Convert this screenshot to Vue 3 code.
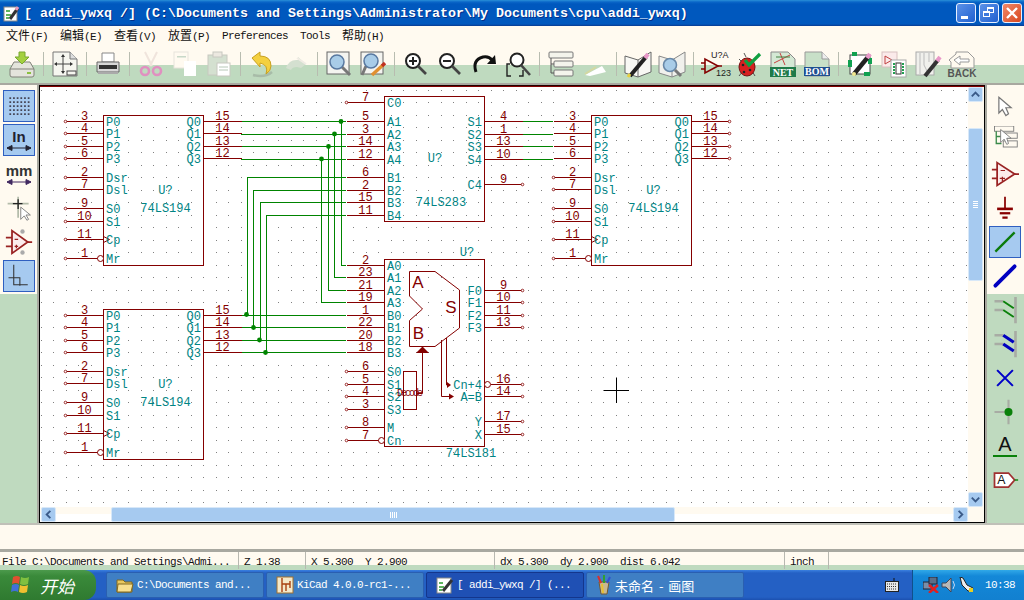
<template>
  <div class="window">
    <div class="titlebar">
      <svg class="title-icon" width="17" height="17" viewBox="0 0 17 17">
        <rect x="1" y="2" width="13" height="14" fill="#fff" stroke="#888" />
        <path d="M3 6h4M3 10h5M3 13h3" stroke="#2a9a2a" stroke-width="1.5" />
        <path d="M7 14 15 3" stroke="#333" stroke-width="3" />
        <path d="M13 5 15 2" stroke="#e89ac0" stroke-width="3" />
      </svg>
      <span class="title-text">[ addi_ywxq /] (C:\Documents and Settings\Administrator\My Documents\cpu\addi_ywxq)</span>
      <div class="win-btns">
        <div class="win-btn"><i class="min-glyph"></i></div>
        <div class="win-btn"><i class="max-back"></i><i class="max-front"></i></div>
        <div class="win-btn close">
          <svg width="14" height="14" viewBox="0 0 14 14"><path d="M2 2 12 12M12 2 2 12" stroke="#fff" stroke-width="2.4" /></svg>
        </div>
      </div>
    </div>

    <div class="menubar">
      <span v-for="m in menus" :key="m.key" class="menu-item">
        <span v-if="m.cjk" class="menu-cjk">{{ m.cjk }}</span>{{ m.key }}
      </span>
    </div>

    <div class="toolbar">
      <div class="ti"><svg viewBox="0 0 26 26"><path d="M1 18 5 11H21L25 18V24Q25 26 23 26H3Q1 26 1 24Z" fill="#e4e4dc" stroke="#808078" /><path d="M1 18H25" stroke="#808078" /><rect x="18" y="21" width="4" height="2" fill="#8ac040" /><path d="M10 1H16V6H20L13 13 6 6H10Z" fill="#a4d040" stroke="#78a830" /></svg></div>
      <div class="sep"></div>
      <div class="ti"><svg viewBox="0 0 26 26"><path d="M1 1H18L25 8V25H1Z" fill="#f6f6f0" stroke="#777" /><path d="M18 1V8H25" fill="#ddd" stroke="#777" /><path d="M11 5V21M4 13H19" stroke="#444" /><path d="M11 3 9 6H13ZM11 23 9 20H13ZM2 13 5 11V15ZM21 13 18 11V15Z" fill="#333" /><rect x="15" y="20" width="9" height="4" fill="none" stroke="#444" /></svg></div>
      <div class="sep"></div>
      <div class="ti"><svg viewBox="0 0 26 26"><path d="M7 2H19V11H7Z" fill="#fff" stroke="#888" /><path d="M2 11H24V21H2Z" fill="#d8d8d8" stroke="#666" /><rect x="4" y="14" width="18" height="4" fill="#333" /><rect x="3" y="21" width="20" height="2" fill="#aaa" /></svg></div>
      <div class="sep"></div>
      <div class="ti"><svg viewBox="0 0 26 26"><path d="M7 1 14 15M19 1 12 15" stroke="#f0e4dc" stroke-width="2" /><circle cx="7" cy="20" r="4" fill="none" stroke="#e090c0" stroke-width="2.6" /><circle cx="19" cy="20" r="4" fill="none" stroke="#e090c0" stroke-width="2.6" /></svg></div>
      <div class="ti"><svg viewBox="0 0 26 26"><rect x="2" y="1" width="14" height="16" fill="#fffaf0" stroke="#e8e4dc" /><rect x="5" y="5" width="9" height="1.5" fill="#c8d8c8" /><rect x="12" y="10" width="12" height="15" fill="#fff" /></svg></div>
      <div class="ti"><svg viewBox="0 0 26 26"><rect x="2" y="4" width="19" height="20" fill="#d4e0d0" stroke="#c8c8c0" /><rect x="7" y="1" width="9" height="5" fill="#ece8e0" stroke="#c8c8c0" /><rect x="11" y="12" width="13" height="13" fill="#fff" stroke="#c8c8c0" /><path d="M13 16h9M13 19h9" stroke="#b8c8b8" /></svg></div>
      <div class="sep"></div>
      <div class="ti"><svg viewBox="0 0 26 26"><path d="M4 24Q16 27 23 21" stroke="#a8bca8" stroke-width="2.5" fill="none" /><path d="M3 7 11 1V5Q22 5 22 15 22 20 17 23 20 14 11 12V16Z" fill="#f4d040" stroke="#c8a020" /></svg></div>
      <div class="ti"><svg viewBox="0 0 26 26"><path d="M3 17Q6 8 15 9V6L23 13 18 17 14 16Q9 16 8 19Z" fill="#d4e0d0" /><path d="M14 7 23 13" stroke="#f0ece4" stroke-width="2" /></svg></div>
      <div class="sep"></div>
      <div class="ti"><svg viewBox="0 0 26 26"><rect x="1" y="1" width="22" height="22" fill="#f4f4f0" stroke="#666" /><path d="M16 16 24 24" stroke="#777" stroke-width="3" /><circle cx="11" cy="11" r="7" fill="#a8cce8" stroke="#5878a0" stroke-width="1.5" /></svg></div>
      <div class="ti"><svg viewBox="0 0 26 26"><rect x="1" y="1" width="22" height="22" fill="#f4f4f0" stroke="#666" /><path d="M6 15 2 24" stroke="#777" stroke-width="3" /><circle cx="11" cy="10" r="7" fill="#a8cce8" stroke="#5878a0" stroke-width="1.5" /><path d="M12 24 23 14" stroke="#e09030" stroke-width="3.4" /><path d="M22 15 25 12" stroke="#c03020" stroke-width="3.4" /></svg></div>
      <div class="sep"></div>
      <div class="ti"><svg viewBox="0 0 26 26"><circle cx="10" cy="10" r="7" fill="#fff" stroke="#222" stroke-width="2" /><path d="M15 15 23 23" stroke="#444" stroke-width="2.6" /><path d="M6 10H14M10 6V14" stroke="#222" stroke-width="2" /></svg></div>
      <div class="ti"><svg viewBox="0 0 26 26"><circle cx="10" cy="10" r="7" fill="#fff" stroke="#222" stroke-width="2" /><path d="M15 15 23 23" stroke="#444" stroke-width="2.6" /><path d="M6 10H14" stroke="#222" stroke-width="2" /></svg></div>
      <div class="ti"><svg viewBox="0 0 26 26"><path d="M5 21Q1 9 12 6 18 5 21 9" fill="none" stroke="#111" stroke-width="3" /><path d="M16 13 25 13 24 4Z" fill="#111" /></svg></div>
      <div class="ti"><svg viewBox="0 0 26 26"><circle cx="12" cy="9" r="6.5" fill="#fff" stroke="#222" stroke-width="2" /><path d="M16 14 25 24" stroke="#444" stroke-width="2.6" /><path d="M5 13H2V25H6M14 25H18V19" fill="none" stroke="#222" stroke-width="1.4" /></svg></div>
      <div class="sep"></div>
      <div class="ti"><svg viewBox="0 0 26 26"><rect x="1" y="1" width="24" height="6" rx="1" fill="#f4f4ec" stroke="#777" /><rect x="6" y="10" width="19" height="6" rx="1" fill="#f4f4ec" stroke="#777" /><rect x="6" y="19" width="19" height="6" rx="1" fill="#f4f4ec" stroke="#777" /><path d="M3 7V22H6M3 13H6" fill="none" stroke="#555" /></svg></div>
      <div class="ti"><svg viewBox="0 0 26 26"><path d="M3 24 20 15 24 21 8 25Z" fill="#fff" /><path d="M3 23 14 16" stroke="#d4d8a0" stroke-width="2" /><path d="M13 8 22 13" stroke="#fffaf0" stroke-width="2" /></svg></div>
      <div class="sep"></div>
      <div class="ti"><svg viewBox="0 0 26 26"><path d="M0 5 13 9 26 1V21L13 26 0 22Z" fill="#f8f8f4" stroke="#666" /><path d="M13 9V26" stroke="#666" /><path d="M5 25 21 6" stroke="#222" stroke-width="4" /><path d="M20 7 23 3" stroke="#e898c8" stroke-width="4" /><path d="M3 26 5 23" stroke="#e8d040" stroke-width="3" /></svg></div>
      <div class="ti"><svg viewBox="0 0 26 26"><path d="M0 5 13 9 26 1V21L13 26 0 22Z" fill="#f0f0ec" stroke="#888" /><path d="M13 9V26" stroke="#888" /><circle cx="11" cy="14" r="6.5" fill="#a8cce8" stroke="#6888a8" stroke-width="1.6" /><path d="M16 19 22 25" stroke="#777" stroke-width="3" /></svg></div>
      <div class="sep"></div>
      <div class="ti ti-wide"><svg viewBox="0 0 28 26"><path d="M4 8V22L17 15Z" fill="none" stroke="#840000" stroke-width="1.6" /><path d="M0 12H4M0 18H4M17 15H21" stroke="#840000" stroke-width="1.4" /><text x="10" y="7" class="ic-u">U?A</text><text x="15" y="25" class="ic-u">123</text></svg></div>
      <div class="ti"><svg viewBox="0 0 26 26"><path d="M3 8 7 12M3 25 7 20M19 25 16 20M20 6 17 10" stroke="#555" /><ellipse cx="11" cy="16" rx="8" ry="9" fill="#d82020" stroke="#701010" /><circle cx="7" cy="14" r="1.3" fill="#222" /><circle cx="14" cy="19" r="1.3" fill="#222" /><circle cx="8" cy="21" r="1.3" fill="#222" /><path d="M8 2 10 6" stroke="#555" /><path d="M9 9 13 14 24 3" fill="none" stroke="#10a040" stroke-width="3.2" /></svg></div>
      <div class="ti"><svg viewBox="0 0 26 26"><path d="M1 1H18L25 8V25H1Z" fill="#d4e8d4" stroke="#888" /><path d="M4 12 20 4M10 2 15 14" stroke="#c84040" /><path d="M6 6H20" stroke="#408040" /><rect x="0" y="16" width="26" height="10" fill="#1e7a48" /><text x="13" y="24.5" class="ic-band">NET</text></svg></div>
      <div class="ti"><svg viewBox="0 0 26 26"><path d="M1 1H18L25 8V25H1Z" fill="#c8e0c8" stroke="#999" /><path d="M18 1V8H25" fill="#eee" stroke="#999" /><rect x="0" y="16" width="26" height="9" fill="#1f4f90" /><text x="13" y="24" class="ic-band">BOM</text></svg></div>
      <div class="sep"></div>
      <div class="ti"><svg viewBox="0 0 26 26"><rect x="3" y="4" width="20" height="19" fill="#fff" stroke="#444" /><rect x="1" y="9" width="4" height="7" fill="#10a050" /><rect x="21" y="7" width="4" height="6" fill="#10a050" /><rect x="5" y="1" width="5" height="4" fill="#10a050" /><rect x="17" y="21" width="6" height="4" fill="#10a050" /><path d="M7 23 21 6" stroke="#222" stroke-width="4.4" /><path d="M20 7 23 3" stroke="#e898c8" stroke-width="4.4" /><circle cx="7" cy="23" r="2" fill="#f0e890" /></svg></div>
      <div class="ti"><svg viewBox="0 0 26 26"><rect x="1" y="1" width="15" height="15" fill="#fbeaea" stroke="#d8c0c0" /><path d="M4 5V13L11 9Z" fill="none" stroke="#c04040" /><rect x="10" y="9" width="15" height="17" fill="#fff" stroke="#aaa" /><rect x="15" y="12" width="5" height="11" fill="none" stroke="#333" /><path d="M13 12v11M22 12v11" stroke="#20a050" stroke-width="2" stroke-dasharray="2 1" /></svg></div>
      <div class="ti"><svg viewBox="0 0 26 26"><rect x="1" y="1" width="18" height="23" fill="#f0f0ec" stroke="#aaa" /><path d="M5 2V23M9 2V14L12 20M14 2V11" stroke="#bbb" fill="none" /><path d="M10 25 23 9" stroke="#333" stroke-width="4" /><path d="M22 10 25 6" stroke="#e898c8" stroke-width="4" /></svg></div>
      <div class="ti ti-wide"><svg viewBox="0 0 28 26"><path d="M8 1H20L26 7V17H3V11L1 9 8 3Z" fill="#fffaf0" stroke="#999" /><path d="M6 9 12 5V8H21V11H12V14Z" fill="#fff" stroke="#999" /><text x="14" y="25.5" class="ic-back">BACK</text></svg></div>
    </div>

    <div class="main">
      <div class="side side-left">
        <div class="sbtn sel"><svg viewBox="0 0 32 32"><path :d="gridIcon" fill="#445" /></svg></div>
        <div class="sbtn sel unit"><span class="unit-text">In</span><svg class="unit-arrow" viewBox="0 0 26 6"><path d="M1 3H25M1 3 6 .5V5.500ZM25 3 20 .5V5.500Z" stroke="#223" fill="#223" /></svg></div>
        <div class="sbtn unit"><span class="unit-text mm">mm</span><svg class="unit-arrow" viewBox="0 0 26 6"><path d="M1 3H25M1 3 6 .5V5.500ZM25 3 20 .5V5.500Z" stroke="#402860" fill="#402860" /></svg></div>
        <div class="sbtn"><svg viewBox="0 0 32 32"><path d="M3 11H27M15 3V27" stroke="#b4bcaa" stroke-width="2" /><path d="M9 11H20M15 6V17" stroke="#222" stroke-width="1.5" /><path d="M18 15 18 29 22 25 25 30 27 29 24 24 29 24Z" fill="#fff" stroke="#777" /></svg></div>
        <div class="sbtn"><svg viewBox="0 0 32 32"><path d="M8 3 26 16 8 29Z" fill="#fbecec" stroke="#922" stroke-width="2" /><path d="M1 11H8M1 21H8M26 16H31" stroke="#922" stroke-width="2" /><path d="M11 13H15M13 19V23M11 21H15" stroke="#922" stroke-width="1.4" /><circle cx="20" cy="4" r="2.5" fill="#aaa" /><circle cx="20" cy="28" r="2.5" fill="#aaa" /></svg></div>
        <div class="sbtn sel"><svg viewBox="0 0 32 32"><path d="M10 3V26H26" fill="none" stroke="#333" stroke-width="1.2" /><path d="M4 18H17V27" fill="none" stroke="#333" stroke-width="1.2" /></svg></div>
      </div>

      <div class="canvas-frame">
        <div class="canvas-grid">
          <svg class="sheet" width="928" height="420" viewBox="40 87 928 420">
            <path :d="dots" class="dots" />
            <path v-for="(w, i) in wires" :key="'w' + i" :d="w" class="wire" />
            <circle v-for="(j, i) in junctions" :key="'j' + i" :cx="j[0]" :cy="j[1]" r="2.4" class="junction" />

            <g v-for="c in chips" :key="c.ref + c.x + c.y">
              <rect :x="c.x" :y="c.y" :width="c.w" :height="c.h" class="body" />
              <text :x="c.refX" :y="c.refY" class="lbl mid">U?</text>
              <text :x="c.valX" :y="c.valY" class="lbl mid">{{ c.ref }}</text>
              <g v-for="p in c.pins" :key="p.name">
                <line :x1="p.x1" :y1="p.y" :x2="p.x2" :y2="p.y" class="pin" />
                <circle v-if="p.free" :cx="p.freeX" :cy="p.y" r="1.3" class="pin-end" />
                <circle v-if="p.inv" :cx="p.invX" :cy="p.y" r="3" class="pin-inv" />
                <path v-if="p.clk" :d="p.clk" class="pin-clk" />
                <text :x="p.nameX" :y="p.y + 4" class="lbl" :class="{ end: p.right }">{{ p.name }}</text>
                <text :x="p.numX" :y="p.y - 2" class="num">{{ p.num }}</text>
              </g>
            </g>

            <path d="M409.5 271.5H435L459.5 290V328L435 346.5H409.5V320.5L422.5 309 409.5 296Z" class="alu" />
            <text x="418" y="288" class="alu-text">A</text>
            <text x="418.5" y="339" class="alu-text">B</text>
            <text x="451" y="313" class="alu-text">S</text>
            <rect x="403.5" y="371.5" width="13" height="38" class="alu" />
            <text x="397" y="396" class="decode" textLength="26" lengthAdjust="spacing">Decode</text>
            <path d="M416.5 393.5H422.5V352" class="alu" />
            <path d="M422.5 346.5 416 353H429Z" class="alu-fill" />
            <path d="M446.5 338V385H450" class="alu" />
            <path d="M447 382 451 385 447 388Z" class="alu-fill" />
            <path d="M441.5 340V396.5H449" class="alu" />
            <path d="M449 393.5 454 396.5 449 399.5Z" class="alu-fill" />

            <path d="M604 390.5H629M616.5 378V403" class="cross" />
          </svg>

          <div class="vscroll">
            <div class="sb-btn"><svg viewBox="0 0 14 14"><path d="M3 9 7 5 11 9" class="chev" /></svg></div>
            <div class="vspace"></div>
            <div class="vthumb"><i class="grip-h"></i></div>
            <div class="flex-space"></div>
            <div class="sb-btn"><svg viewBox="0 0 14 14"><path d="M3 5 7 9 11 5" class="chev" /></svg></div>
          </div>

          <div class="hscroll">
            <div class="sb-btn"><svg viewBox="0 0 14 14"><path d="M9 3 5 7 9 11" class="chev" /></svg></div>
            <div class="hspace"></div>
            <div class="hthumb"><i class="grip-v"></i></div>
            <div class="flex-space"></div>
            <div class="sb-btn"><svg viewBox="0 0 14 14"><path d="M5 3 9 7 5 11" class="chev" /></svg></div>
          </div>
          <div class="corner"></div>
        </div>
      </div>

      <div class="side side-right">
        <div class="sbtn"><svg viewBox="0 0 32 32"><path d="M9 6 23 18 17 18 20 25 17 27 13 20 9 24Z" fill="#fff" stroke="#777" stroke-width="1.4" /></svg></div>
        <div class="sbtn"><svg viewBox="0 0 32 32"><rect x="4" y="0" width="22" height="6" fill="#fffaf0" stroke="#777" /><rect x="14" y="8" width="16" height="6" fill="#fffaf0" stroke="#777" /><rect x="14" y="17" width="16" height="7" fill="#fffaf0" stroke="#777" /><path d="M6 6V20H12M6 12H12" fill="none" stroke="#3a8a4a" stroke-width="1.5" /><path d="M11 4 11 19 15 15 18 21 20 20 18 14 23 14Z" fill="#fff" stroke="#777" /></svg></div>
        <div class="sbtn"><svg viewBox="0 0 32 32"><path d="M7 3 27 16 7 29Z" fill="#fbecec" stroke="#922" stroke-width="2" /><path d="M1 11H7M1 21H7M27 16H32" stroke="#922" stroke-width="2" /><path d="M11 12H16M13 19V24M10 21H16" stroke="#922" stroke-width="1.4" /></svg></div>
        <div class="sbtn"><svg viewBox="0 0 32 32"><path d="M16 3V17" stroke="#800" stroke-width="2" /><path d="M7 17H25" stroke="#800" stroke-width="3" /><path d="M10 22H22" stroke="#800" stroke-width="2.6" /><path d="M13 27H19" stroke="#800" stroke-width="2.6" /></svg></div>
        <div class="sbtn sel"><svg viewBox="0 0 32 32"><path d="M5 27 27 5" stroke="#0a7a0a" stroke-width="2.6" /></svg></div>
        <div class="sbtn"><svg viewBox="0 0 32 32"><path d="M5 27 27 5" stroke="#0000c0" stroke-width="4.4" stroke-linecap="round" /></svg></div>
        <div class="sbtn"><svg viewBox="0 0 32 32"><path d="M4 6H14M4 16H14M28 1V31" stroke="#a8aca4" stroke-width="3" /><path d="M14 6 26 14M14 16 26 24" stroke="#0a800a" stroke-width="2.2" /></svg></div>
        <div class="sbtn"><svg viewBox="0 0 32 32"><path d="M4 6H14M4 16H14M28 1V31" stroke="#a8aca4" stroke-width="3" /><path d="M14 6 26 14M14 16 26 24" stroke="#0000c0" stroke-width="3.6" /></svg></div>
        <div class="sbtn"><svg viewBox="0 0 32 32"><path d="M7 7 25 25M25 7 7 25" stroke="#0000c8" stroke-width="2.4" /></svg></div>
        <div class="sbtn"><svg viewBox="0 0 32 32"><path d="M4 16H20M20 2V30" stroke="#a8aca4" stroke-width="2.4" /><circle cx="20" cy="16" r="4.6" fill="#0a800a" /></svg></div>
        <div class="sbtn col"><span class="label-a">A</span><i class="label-line"></i></div>
        <div class="sbtn"><svg viewBox="0 0 32 32"><path d="M4 8H20L27 16 20 24H4Z" fill="#fff" stroke="#a03030" stroke-width="2" /><path d="M27 16H31" stroke="#0a800a" stroke-width="1.6" /><text x="7" y="21" class="ic-a">A</text></svg></div>
      </div>
    </div>

    <div class="msg-panel"></div>

    <div class="statusbar">
      <span v-for="s in status" :key="s.text" class="st-cell" :class="s.cls">{{ s.text }}</span>
    </div>

    <div class="taskbar">
      <div class="start">
        <svg width="24" height="22" viewBox="0 0 24 22">
          <path d="M4 3Q8 1 11 3L10 10Q7 8 3 10Z" fill="#e05030" />
          <path d="M12 3Q16 5 20 3L19 10Q15 12 11 10Z" fill="#80c040" />
          <path d="M3 11Q7 9 10 11L9 18Q6 16 2 18Z" fill="#4070d8" />
          <path d="M11 11Q15 13 19 11L18 18Q14 20 10 18Z" fill="#f0c030" />
        </svg>
        <span class="start-text">开始</span>
      </div>
      <div class="task">
        <svg width="18" height="16" viewBox="0 0 18 16"><path d="M1 3H7L9 5H16V15H1Z" fill="#e8c860" stroke="#806820" /><path d="M2 7H17L15 15H1Z" fill="#f8e090" stroke="#806820" /></svg>
        <span>C:\Documents and...</span>
      </div>
      <div class="task">
        <svg width="18" height="18" viewBox="0 0 18 18"><rect x="1" y="1" width="16" height="16" fill="#f4e8c8" stroke="#a07030" /><path d="M6 2V16M6 8H14M10 8V15M14 5V12" stroke="#a84010" stroke-width="1.4" /></svg>
        <span>KiCad 4.0.0-rc1-...</span>
      </div>
      <div class="task active">
        <svg width="18" height="18" viewBox="0 0 18 18"><rect x="1" y="2" width="14" height="15" fill="#fff" stroke="#888" /><path d="M3 7h4M3 11h5M3 14h3" stroke="#2a9a2a" stroke-width="1.5" /><path d="M7 15 16 4" stroke="#333" stroke-width="3" /></svg>
        <span>[ addi_ywxq /] (...</span>
      </div>
      <div class="task paint">
        <svg width="18" height="20" viewBox="0 0 18 20"><path d="M4 7H14L12 19H6Z" fill="#c8b890" stroke="#705830" /><path d="M6 8 3 1" stroke="#d83030" stroke-width="2" /><path d="M9 8V0" stroke="#30a030" stroke-width="2" /><path d="M12 8 15 2" stroke="#3050d0" stroke-width="2" /><path d="M7 9 8 18" stroke="#e8c030" stroke-width="2" /></svg>
        <span class="cjk">未命名 - 画图</span>
      </div>
      <div class="flex-space"></div>
      <svg class="kbd" width="14" height="14" viewBox="0 0 14 14"><path d="M9 0V3" stroke="#111" /><rect x="0.5" y="3.5" width="13" height="10" fill="#e8e8e8" stroke="#222" /><path d="M2 6h10M2 8.500h10M2 11h10" stroke="#333" stroke-dasharray="1 1" /></svg>
      <div class="tray">
        <svg width="16" height="16" viewBox="0 0 16 16"><rect x="0" y="5" width="9" height="7" fill="#7a8ea8" stroke="#223" /><rect x="6" y="0" width="8" height="7" fill="#5a6e88" stroke="#223" /><path d="M6 8 15 16M15 8 6 16" stroke="#e02020" stroke-width="2.4" /></svg>
        <svg width="16" height="16" viewBox="0 0 16 16"><path d="M1 6H5L10 1V15L5 10H1Z" fill="#b8b8b8" stroke="#445" /><path d="M12 4Q15 8 12 12" stroke="#c8d8f0" fill="none" /></svg>
        <svg width="16" height="16" viewBox="0 0 16 16"><path d="M1 0 3 8 9 14H12L14 11 8 8 4 1Z" fill="#eee" stroke="#222" /><rect x="10" y="11" width="4" height="4" fill="#e8d020" /></svg>
        <span class="clock">10:38</span>
      </div>
    </div>
  </div>
</template>

<script setup>
  const menus = [
    { cjk: '文件', key: '(F)' },
    { cjk: '编辑', key: '(E)' },
    { cjk: '查看', key: '(V)' },
    { cjk: '放置', key: '(P)' },
    { key: 'Preferences' },
    { key: 'Tools' },
    { cjk: '帮助', key: '(H)' }
  ]

  const status = [
    { text: 'File C:\\Documents and Settings\\Admi...', cls: 's1' },
    { text: 'Z 1.38', cls: 's2' },
    { text: 'X 5.300  Y 2.900', cls: 's3' },
    { text: 'dx 5.300  dy 2.900  dist 6.042', cls: 's4' },
    { text: 'inch', cls: 's5' },
    { text: '', cls: 's6' }
  ]

  // grid of dots on the sheet, 50 mil at this zoom
  let dots = ''
  for (let i = 0; i < 75; i++) {
    for (let j = 0; j < 34; j++) {
      const x = Math.floor(41.3 + i * 12.5)
      const y = Math.floor(90.1 + j * 12.5)
      dots += `M${x} ${y}h1v1h-1z`
    }
  }

  let gridIcon = ''
  for (let i = 0; i < 6; i++) {
    for (let j = 0; j < 5; j++) {
      gridIcon += `M${5 + i * 4.2} ${6 + j * 4.6}h2v2h-2z`
    }
  }

  const snap = (v) => Math.floor(v) + 0.5

  const leftPin = (bx, row) => {
    const [name, num, y, opts = {}] = row
    const p = {
      name,
      num,
      y: snap(y),
      x1: bx - 38,
      x2: opts.inv ? bx - 6 : bx,
      nameX: bx + 2.5,
      numX: bx - 19,
      free: opts.free,
      freeX: bx - 38,
      inv: opts.inv,
      invX: bx - 3
    }
    if (opts.clk) p.clk = `M${bx} ${snap(y) - 3}L${bx + 6} ${snap(y)}L${bx} ${snap(y) + 3}`
    return p
  }

  const rightPin = (bx, row) => {
    const [name, num, y, opts = {}] = row
    return {
      name,
      num,
      right: true,
      y: snap(y),
      x1: opts.inv ? bx + 6 : bx,
      x2: bx + 38,
      nameX: bx - 2.5,
      numX: bx + 19,
      free: opts.free,
      freeX: bx + 38,
      inv: opts.inv,
      invX: bx + 3
    }
  }

  const make194 = (x, y, inFree, outFree) => {
    const lefts = [
      ['P0', '3', 6, { free: inFree }],
      ['P1', '4', 18.5, { free: inFree }],
      ['P2', '5', 31, { free: inFree }],
      ['P3', '6', 43.5, { free: inFree }],
      ['Dsr', '2', 62, { free: true }],
      ['Dsl', '7', 74.5, { free: true }],
      ['S0', '9', 93.5, { free: true }],
      ['S1', '10', 106, { free: true }],
      ['Cp', '11', 124.5, { free: true, clk: true }],
      ['Mr', '1', 143.5, { free: true, inv: true }]
    ]
    const rights = [
      ['Q0', '15', 6, { free: outFree }],
      ['Q1', '14', 18.5, { free: outFree }],
      ['Q2', '13', 31, { free: outFree }],
      ['Q3', '12', 43.5, { free: outFree }]
    ]
    const shift = (r) => [r[0], r[1], y + r[2], r[3]]
    return {
      ref: '74LS194',
      x: x + 0.5,
      y: y + 0.5,
      w: 100,
      h: 149.5,
      refX: x + 62.5,
      refY: y + 79,
      valX: x + 62.5,
      valY: y + 97,
      pins: [
        ...lefts.map((r) => leftPin(x + 0.5, shift(r))),
        ...rights.map((r) => rightPin(x + 100.5, shift(r)))
      ]
    }
  }

  const chip283 = {
    ref: '74LS283',
    x: 384.5,
    y: 96.5,
    w: 100,
    h: 125,
    refX: 435,
    refY: 162,
    valX: 441,
    valY: 206,
    pins: [
      ...[
        ['C0', '7', 102, { free: true }],
        ['A1', '5', 121],
        ['A2', '3', 134],
        ['A3', '14', 146.5],
        ['A4', '12', 159],
        ['B1', '6', 177.5],
        ['B2', '2', 190],
        ['B3', '15', 202.5],
        ['B4', '11', 215]
      ].map((r) => leftPin(384.5, r)),
      ...[
        ['S1', '4', 121],
        ['S2', '1', 134],
        ['S3', '13', 146.5],
        ['S4', '10', 159],
        ['C4', '9', 184, { free: true }]
      ].map((r) => rightPin(484.5, r))
    ]
  }

  const chip181 = {
    ref: '74LS181',
    x: 384.5,
    y: 259.5,
    w: 100,
    h: 187,
    refX: 467,
    refY: 256,
    valX: 471,
    valY: 457,
    pins: [
      ...[
        ['A0', '2', 265],
        ['A1', '23', 277.5],
        ['A2', '21', 290],
        ['A3', '19', 302.5],
        ['B0', '1', 315],
        ['B1', '22', 327.5],
        ['B2', '20', 340],
        ['B3', '18', 352.5],
        ['S0', '6', 371.5, { free: true }],
        ['S1', '5', 384, { free: true }],
        ['S2', '4', 396.5, { free: true }],
        ['S3', '3', 409, { free: true }],
        ['M', '8', 427.5, { free: true }],
        ['Cn', '7', 440, { free: true, inv: true }]
      ].map((r) => leftPin(384.5, r)),
      ...[
        ['F0', '9', 290, { free: true }],
        ['F1', '10', 302.5, { free: true }],
        ['F2', '11', 315, { free: true }],
        ['F3', '13', 327.5, { free: true }],
        ['Cn+4', '16', 384, { free: true, inv: true }],
        ['A=B', '14', 396.5, { free: true }],
        ['Y', '17', 421.5, { free: true }],
        ['X', '15', 434, { free: true }]
      ].map((r) => rightPin(484.5, r))
    ]
  }

  const chips = [
    make194(103, 115, true, false),
    make194(103, 309, true, false),
    make194(591, 115, false, true),
    chip283,
    chip181
  ]

  const wires = [
    'M241 121.500H346M241 134.500H346M241 146.500H346M241 159.500H346',
    'M241 315.500H346M241 327.500H346M241 340.500H346M241 352.500H346',
    'M522 121.500H553M522 134.500H553M522 146.500H553M522 159.500H553',
    'M341.500 121.500V265.500H346M334.500 134.500V277.500H346M328.500 146.500V290.500H346M321.500 159.500V302.500H346',
    'M247.500 315.500V177.500H346M253.500 327.500V190.500H346M260.500 340.500V202.500H346M266.500 352.500V215.500H346'
  ]

  const junctions = [
    [341, 121.5],
    [334.5, 134],
    [328.5, 146.5],
    [321.5, 159],
    [246.5, 314.5],
    [253.5, 327.5],
    [259.5, 340],
    [265.5, 352.5]
  ]
</script>

<style>
  html,
  body {
    margin: 0;
    overflow: hidden;
    background: #fffaf0;
  }
</style>

<style scoped>
  .window {
    width: 1024px;
    height: 600px;
    display: flex;
    flex-direction: column;
    overflow: hidden;
    font-family: 'Liberation Mono', 'Noto Sans CJK SC', monospace;
    background: #fffaf0;
  }

  .titlebar {
    height: 26px;
    flex: none;
    display: flex;
    align-items: center;
    box-sizing: border-box;
    background: linear-gradient(#2a90d8 0, #0a66c8 2px, #0058be 4px, #0058be 24px, #0a3a90 26px);
    padding-left: 3px;
  }

  .title-icon {
    flex: none;
    margin-right: 4px;
  }

  .title-text {
    color: #fff;
    font-size: 13.33px;
    font-weight: bold;
    white-space: pre;
    text-shadow: 1px 1px 0 #03308a;
  }

  .win-btns {
    margin-left: auto;
    margin-right: 2px;
    display: flex;
    gap: 3px;
  }

  .win-btn {
    position: relative;
    width: 20px;
    height: 20px;
    box-sizing: border-box;
    border: 1px solid #e8f0ff;
    border-radius: 3px;
    background: linear-gradient(135deg, #5c92e8, #2060d0);
    display: flex;
    align-items: center;
    justify-content: center;
  }

  .win-btn.close {
    background: linear-gradient(135deg, #f08868, #d84820);
  }

  .min-glyph {
    position: absolute;
    left: 4px;
    bottom: 3px;
    width: 7px;
    height: 3px;
    background: #fff;
  }

  .max-back,
  .max-front {
    position: absolute;
    width: 7px;
    height: 6px;
    box-sizing: border-box;
    border: 1px solid #fff;
    border-top-width: 2px;
  }

  .max-back {
    left: 7px;
    top: 3px;
  }

  .max-front {
    left: 3px;
    top: 7px;
    background: #3c78dc;
  }

  .menubar {
    height: 19px;
    flex: none;
    display: flex;
    align-items: center;
    background: #fffaf0;
    color: #111;
  }

  .menu-item {
    padding: 1px 6px 0;
    letter-spacing: -0.6px;
    white-space: nowrap;
    font-size: 11px;
    line-height: 16px;
    width: max-content;
  }

  .menu-cjk {
    display: inline-block;
    width: 24px;
    font-family: 'Noto Sans CJK SC', sans-serif;
    font-size: 12px;
    letter-spacing: 0;
  }

  .toolbar {
    height: 38px;
    flex: none;
    display: flex;
    align-items: center;
    padding-left: 5px;
    background: linear-gradient(#fffaf0 20px, #bfdabf 20px);
    border-bottom: 2px solid #a8a8a0;
  }

  .ti {
    width: 34px;
    height: 26px;
    flex: none;
    display: flex;
    justify-content: center;
  }

  .ti svg {
    width: 26px;
    height: 26px;
    overflow: visible;
  }

  .ti-wide svg {
    width: 28px;
  }

  .sep {
    width: 1px;
    height: 24px;
    margin: 0 4px;
    flex: none;
    background: #b8bcb0;
  }

  .ic-u {
    font-family: 'Liberation Sans', sans-serif;
    font-size: 9px;
    fill: #222;
  }

  .ic-band {
    font-family: 'Liberation Serif', serif;
    font-weight: bold;
    font-size: 10px;
    fill: #fff;
    text-anchor: middle;
  }

  .ic-back {
    font-family: 'Liberation Sans', sans-serif;
    font-weight: bold;
    font-size: 10px;
    fill: #555;
    text-anchor: middle;
  }

  .ic-a {
    font-family: 'Liberation Sans', sans-serif;
    font-size: 14px;
    fill: #111;
  }

  .main {
    height: 438px;
    flex: none;
    display: flex;
  }

  .side {
    width: 39px;
    flex: none;
    box-sizing: border-box;
    display: flex;
    flex-direction: column;
    gap: 2px;
    padding-top: 5px;
    background: linear-gradient(#fffaf0 209px, #bfdabf 209px);
  }

  .side-left {
    padding-left: 3px;
    border-right: 2px solid #a8a8a0;
  }

  .side-right {
    padding-left: 2px;
    border-left: 2px solid #a8a8a0;
  }

  .sbtn {
    width: 32px;
    height: 32px;
    flex: none;
    box-sizing: border-box;
    display: flex;
    align-items: center;
    justify-content: center;
  }

  .sbtn svg {
    width: 28px;
    height: 28px;
  }

  .sbtn.sel {
    background: #a6caf0;
    border: 1px solid #2f5fc0;
  }

  .unit,
  .col {
    flex-direction: column;
    gap: 1px;
  }

  .unit-text {
    font-family: 'Liberation Sans', sans-serif;
    font-weight: bold;
    font-size: 15px;
    line-height: 15px;
    color: #223;
  }

  .unit-text.mm {
    color: #333;
  }

  .sbtn .unit-arrow {
    width: 26px;
    height: 6px;
  }

  .label-a {
    font-family: 'Liberation Sans', sans-serif;
    font-size: 20px;
    line-height: 19px;
    color: #111;
  }

  .label-line {
    width: 24px;
    height: 2px;
    background: #0a800a;
  }

  .canvas-frame {
    width: 946px;
    height: 438px;
    flex: none;
    box-sizing: border-box;
    border: 1px solid #000;
    border-top: 1px solid #200;
  }

  .canvas-grid {
    height: 436px;
    box-sizing: border-box;
    border-top: 1px solid #840000;
    display: grid;
    grid-template-columns: 928px 16px;
    grid-template-rows: 420px 15px;
  }

  .sheet {
    display: block;
    background: #fff;
  }

  .dots {
    fill: #808080;
    shape-rendering: crispEdges;
  }

  .wire {
    fill: none;
    stroke: #008400;
    stroke-width: 1;
    shape-rendering: crispEdges;
  }

  .junction {
    fill: #008400;
  }

  .body {
    fill: none;
    stroke: #840000;
    stroke-width: 1;
    shape-rendering: crispEdges;
  }

  .pin {
    stroke: #840000;
    stroke-width: 1;
    shape-rendering: crispEdges;
  }

  .pin-end,
  .pin-inv {
    fill: #fff;
    stroke: #840000;
    stroke-width: 1;
  }

  .pin-clk {
    fill: none;
    stroke: #840000;
    stroke-width: 1;
  }

  .pin-end {
    stroke-width: 0.8;
  }

  .lbl {
    fill: #008484;
    font-family: 'Liberation Mono', monospace;
    font-size: 12px;
  }

  .lbl.end {
    text-anchor: end;
  }

  .lbl.mid {
    text-anchor: middle;
  }

  .num {
    fill: #840000;
    font-family: 'Liberation Mono', monospace;
    font-size: 12px;
    text-anchor: middle;
  }

  .alu {
    fill: none;
    stroke: #840000;
    stroke-width: 1;
  }

  .alu-fill {
    fill: #840000;
  }

  .alu-text {
    fill: #840000;
    font-family: 'Liberation Sans', sans-serif;
    font-size: 17px;
    text-anchor: middle;
  }

  .decode {
    fill: #840000;
    font-family: 'Liberation Mono', monospace;
    font-size: 10px;
  }

  .cross {
    stroke: #000;
    stroke-width: 1;
    shape-rendering: crispEdges;
  }

  .vscroll {
    display: flex;
    flex-direction: column;
    align-items: flex-start;
    background: #fffaf0;
  }

  .hscroll {
    display: flex;
    padding-left: 1px;
    box-sizing: border-box;
    background: linear-gradient(#fffaf0 7px, #fff 7px);
  }

  .corner {
    background: #fffaf0;
  }

  .sb-btn {
    width: 15px;
    height: 15px;
    flex: none;
    box-sizing: border-box;
    background: #a6caf0;
    border: 1px solid #d8e8f8;
    border-radius: 2px;
    display: flex;
    align-items: center;
    justify-content: center;
  }

  .sb-btn svg {
    width: 13px;
    height: 13px;
  }

  .chev {
    fill: none;
    stroke: #3a5a88;
    stroke-width: 2;
  }

  .vspace {
    height: 26px;
    flex: none;
  }

  .hspace {
    width: 55px;
    flex: none;
  }

  .flex-space {
    flex: 1;
  }

  .vthumb,
  .hthumb {
    flex: none;
    box-sizing: border-box;
    background: #a6caf0;
    border: 1px solid #d8e8f8;
    border-radius: 2px;
    display: flex;
    align-items: center;
    justify-content: center;
  }

  .vthumb {
    width: 15px;
    height: 153px;
  }

  .hthumb {
    width: 564px;
    height: 15px;
  }

  .grip-h {
    width: 5px;
    height: 7px;
    background: repeating-linear-gradient(#fff 0 1px, transparent 1px 2px);
  }

  .grip-v {
    width: 7px;
    height: 6px;
    background: repeating-linear-gradient(90deg, #fff 0 1px, transparent 1px 2px);
  }

  .msg-panel {
    height: 29px;
    flex: none;
    box-sizing: border-box;
    background: #fffaf0;
    border-top: 2px solid #c0c0b8;
    border-bottom: 3px solid #a8a8a0;
  }

  .statusbar {
    height: 18px;
    flex: none;
    display: flex;
    background: linear-gradient(#fffaf0 13px, #bfdabf 13px);
    font-size: 11px;
    letter-spacing: -0.6px;
    color: #111;
  }

  .st-cell {
    flex: none;
    box-sizing: border-box;
    height: 17px;
    line-height: 20px;
    padding-left: 5px;
    white-space: pre;
    border-right: 1px solid #b8b8b0;
    overflow: hidden;
  }

  .s1 {
    width: 239px;
    padding-left: 2px;
  }

  .s2 {
    width: 67px;
  }

  .s3 {
    width: 189px;
  }

  .s4 {
    width: 290px;
  }

  .s5 {
    width: 44px;
  }

  .s6 {
    flex: 1;
    border-right: 0;
  }

  .taskbar {
    height: 30px;
    flex: none;
    display: flex;
    align-items: center;
    background: linear-gradient(#3a80e0 0, #2460c4 3px, #2460c4 27px, #1c50b0 30px);
  }

  .start {
    width: 96px;
    height: 30px;
    flex: none;
    box-sizing: border-box;
    padding-left: 9px;
    display: flex;
    align-items: center;
    gap: 7px;
    background: linear-gradient(#4c9a4c, #3a8a3a 20%, #2f7a30);
    border-radius: 0 12px 12px 0;
  }

  .start-text {
    color: #fff;
    font-family: 'Noto Sans CJK SC', sans-serif;
    font-style: italic;
    font-size: 17px;
  }

  .task {
    width: 158px;
    height: 26px;
    flex: none;
    box-sizing: border-box;
    margin-right: 2px;
    padding-left: 9px;
    display: flex;
    align-items: center;
    gap: 3px;
    color: #fff;
    font-size: 11px;
    letter-spacing: -0.6px;
    white-space: pre;
    background: #3f7fc4;
    border: 1px solid #2a5fb0;
    border-radius: 2px;
  }

  .task:nth-child(2) {
    margin-left: 10px;
  }

  .task.active {
    background: #1f50b4;
    border-color: #14368c;
  }

  .task.paint {
    padding-left: 8px;
    gap: 2px;
  }

  .cjk {
    font-family: 'Noto Sans CJK SC', sans-serif;
    font-size: 13px;
    letter-spacing: 0;
    word-spacing: 2px;
  }

  .kbd {
    flex: none;
    margin-right: 13px;
  }

  .tray {
    width: 112px;
    height: 30px;
    flex: none;
    box-sizing: border-box;
    padding-left: 10px;
    display: flex;
    align-items: center;
    gap: 2px;
    background: linear-gradient(#30a8e8, #1488d8 20%, #1280d0);
    border-left: 1px solid #10508c;
  }

  .clock {
    margin-left: 8px;
    color: #fff;
    font-size: 11px;
    letter-spacing: -0.6px;
  }
</style>
